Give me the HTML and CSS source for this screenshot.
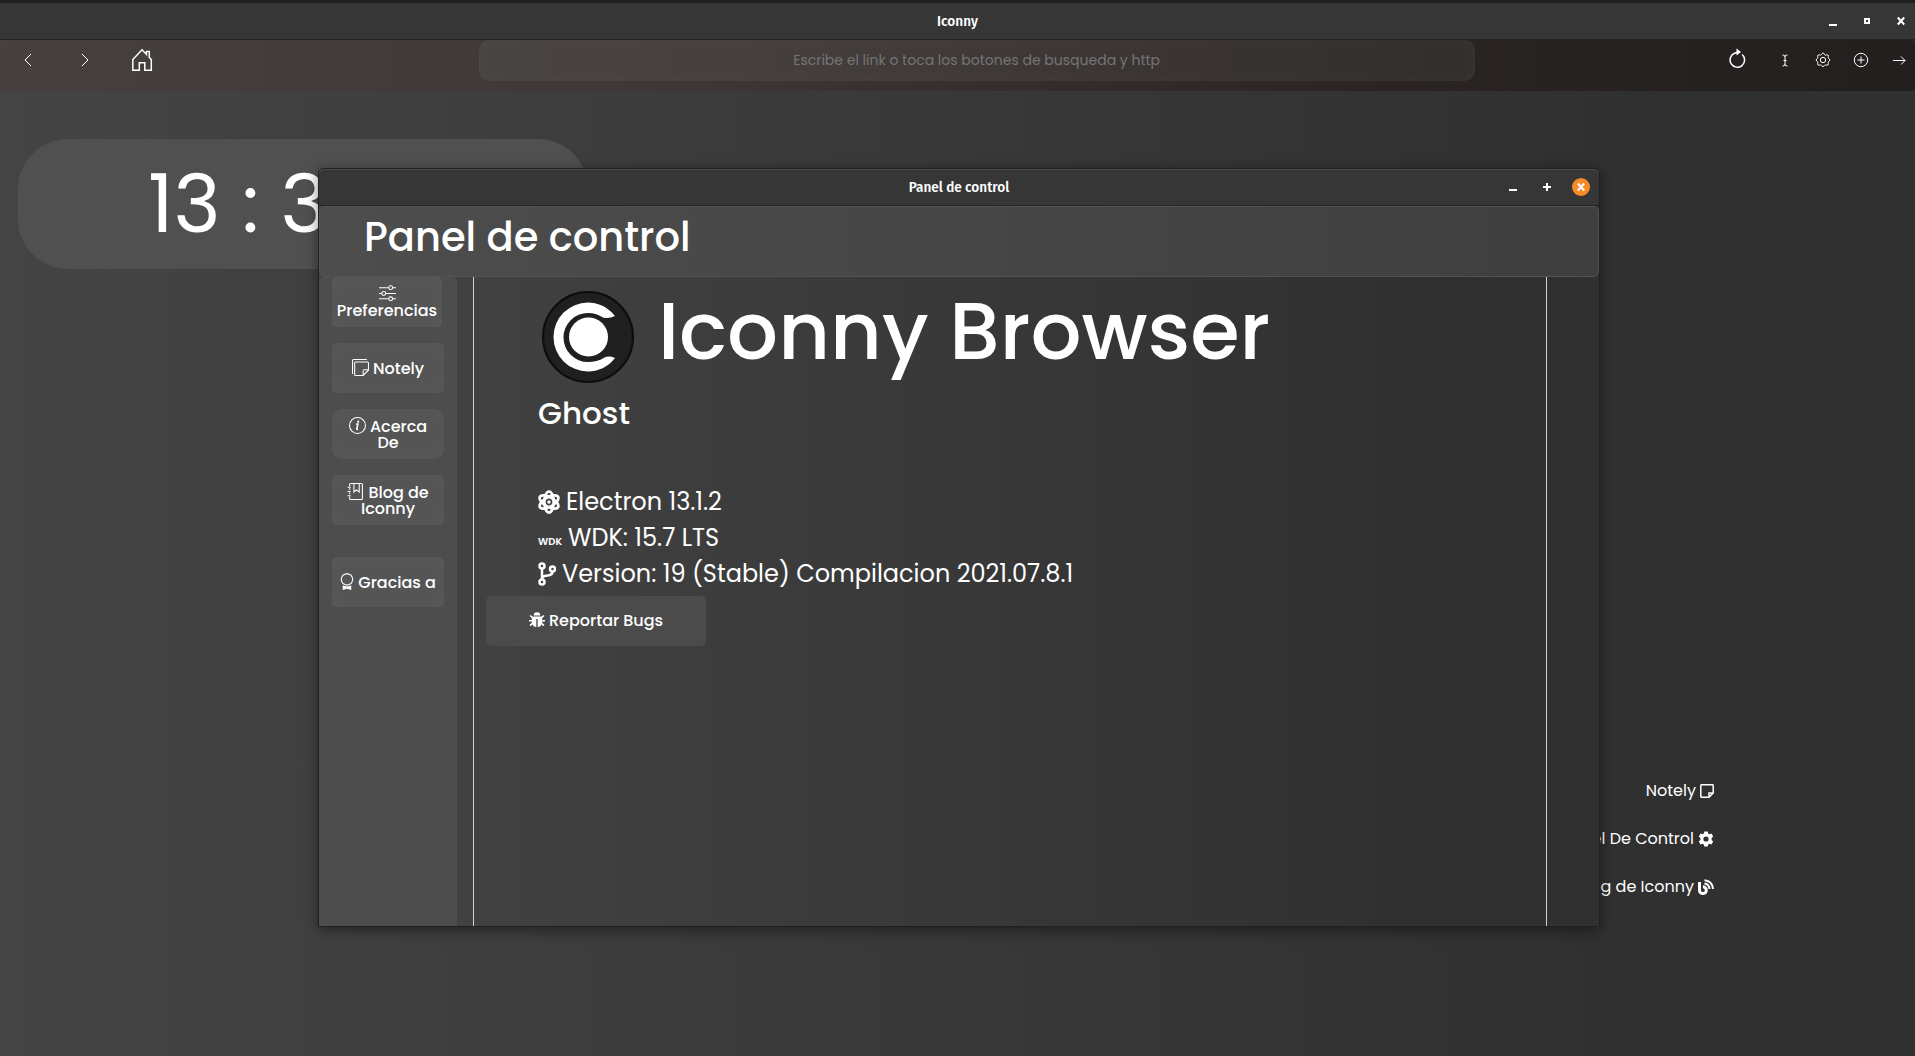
FILE: index.html
```html
<!DOCTYPE html>
<html lang="es">
<head>
<meta charset="utf-8">
<title>Iconny</title>
<link rel="stylesheet" href="styles.css">
</head>
<body>
<header class="titlebar main-titlebar">
  <h1 class="titlebar-name">Iconny</h1>
  <div class="window-controls">
    <button type="button" class="win-btn" aria-label="Minimizar"><svg viewBox="0 0 18 18"><path d="M5 12h8v2H5z"/></svg></button>
    <button type="button" class="win-btn" aria-label="Restaurar"><svg viewBox="0 0 18 18"><path d="M6 6h6v6H6zM8 8v2h2V8z" fill-rule="evenodd"/></svg></button>
    <button type="button" class="win-btn" aria-label="Cerrar"><svg viewBox="0 0 18 18"><path class="cross" d="M5.800 5.500l6.400 7M12.200 5.500l-6.400 7"/></svg></button>
  </div>
</header>
<nav class="toolbar">
  <div class="nav-buttons">
    <button type="button" class="tool" aria-label="Atrás"><svg class="line" viewBox="0 0 24 24"><path d="M15 6l-6 6 6 6"/></svg></button>
    <button type="button" class="tool" aria-label="Adelante"><svg class="line" viewBox="0 0 24 24"><path d="M9 6l6 6-6 6"/></svg></button>
    <button type="button" class="tool" aria-label="Inicio"><svg class="line home" viewBox="0 0 24 24"><path d="M2.800 22.300V11.500L12 1.800l4.500 4.700V3.500h2.800v6l2 2v10.800h-6.500v-7.500H9.300v7.500z"/></svg></button>
  </div>
  <input class="address" type="text" aria-label="Dirección" placeholder="Escribe el link o toca los botones de busqueda y http">
  <div class="page-buttons">
    <button type="button" class="tool reload" aria-label="Recargar"><svg class="line" viewBox="0 0 24 24"><path class="medium" d="M17.200 6.500A7.300 7.300 0 1 1 9.500 5.200L13 4.300"/><path class="solid" d="M11.500 .5l4.500 3.600-4.500 3.400z"/></svg></button>
    <button type="button" class="tool" aria-label="Texto"><svg class="line" viewBox="0 0 24 24"><path d="M9.500 7q2.500 0 2.500 1.500Q12 7 14.500 7M12 8v9M9.500 18q2.500 0 2.500-1.500Q12 18 14.500 18M10.500 12.500h3"/></svg></button>
    <button type="button" class="tool" aria-label="Ajustes"><svg class="line" viewBox="0 0 24 24"><circle cx="12" cy="12" r="2.700"/><path d="M12 5q1.100 0 1.500 1.500t2.100.3q2.200-.2 1.700 1.700-.8 1.500.6 2 2.100 1.500 0 3-1.400.6-.6 2 .4 2-1.700 1.700-1.600-.8-2.100.4-1.500 2.200-3 0-.5-1.200-2.100-.4-2.100.3-1.700-1.700.8-1.400-.6-2-2.100-1.500 0-3 1.400-.5.6-2-.4-1.900 1.700-1.700 1.700.900 2.100-.300T12 5z"/></svg></button>
    <button type="button" class="tool" aria-label="Nueva pestaña"><svg class="line" viewBox="0 0 24 24"><circle cx="12" cy="12" r="6.700"/><path d="M12 8.500v7M8.500 12h7"/></svg></button>
    <button type="button" class="tool" aria-label="Ir"><svg class="line" viewBox="0 0 24 24"><path d="M6 12.500h12M14 8.500l4 4-4 4"/></svg></button>
  </div>
</nav>
<main class="home-page">
  <section class="clock"><time datetime="13:37">13 : 37</time></section>
  <nav class="shortcuts">
    <a href="#notely">Notely <svg class="line bold-line" viewBox="0 0 14 14"><path d="M1.500 .8h11q.7 0 .7.700v7.500l-4.200 4.200H1.500q-.7 0-.7-.7v-11q0-.7.7-.7zM13 9H9v4"/></svg></a>
    <a href="#panel">Panel De Control <svg class="wide" viewBox="0 0 16 16"><path fill-rule="evenodd" d="M6.300.5h3.400l.5 2.100 1.200.7 2.100-.7 1.700 3-1.600 1.500v1.800l1.600 1.500-1.700 3-2.100-.7-1.200.7-.5 2.100H6.300l-.5-2.100-1.200-.7-2.100.7-1.700-3 1.600-1.500V7.100L.8 5.600l1.700-3 2.100.7 1.200-.7zM8 5.400a2.600 2.600 0 1 0 0 5.200 2.600 2.600 0 0 0 0-5.200z"/></svg></a>
    <a href="#blog">Blog de Iconny <svg class="wide" viewBox="0 0 16 16"><path class="blog-b" d="M1.500 3v8.200A3.400 3.400 0 1 0 4.900 7.800"/><path class="waves" d="M6.500 4.500q4.500.5 5 5.500M6.500 1.200q8 .8 8.500 8.800"/></svg></a>
  </nav>
</main>

<section class="panel" aria-label="Panel de control">
  <header class="titlebar panel-titlebar">
    <p class="titlebar-name">Panel de control</p>
    <div class="window-controls">
      <button type="button" class="win-btn" aria-label="Minimizar"><svg viewBox="0 0 18 18"><path d="M5 11h8v2H5z"/></svg></button>
      <button type="button" class="win-btn" aria-label="Maximizar"><svg viewBox="0 0 18 18"><path d="M8 5h2v3h3v2h-3v3H8v-3H5V8h3z"/></svg></button>
      <button type="button" class="win-btn close" aria-label="Cerrar"><svg viewBox="0 0 18 18"><path class="cross" d="M5.800 5.500l6.400 7M12.200 5.500l-6.400 7"/></svg></button>
    </div>
  </header>
  <header class="panel-header"><h2>Panel de control</h2></header>
  <div class="panel-body">
    <nav class="sidebar">
      <button type="button" class="side-btn prefs"><svg class="line" viewBox="0 0 16 16"><path d="M0 2.500h9.200M12.800 2.500H16M0 8h2.700M6.300 8H16M0 13h9.200M12.800 13H16"/><circle cx="11" cy="2.500" r="1.800"/><circle cx="4.500" cy="8" r="1.800"/><circle cx="11" cy="13" r="1.800"/></svg> Preferencias</button>
      <button type="button" class="side-btn"><svg class="line" viewBox="0 0 16 16"><path d="M.500 14V1.500q0-1 1-1H14M3.500 2.800h11q1 0 1 1v6.700l-5 5h-7q-1 0-1-1V3.800q0-1 1-1zM15.500 10.200h-4q-1 0-1 1v4"/></svg> Notely</button>
      <button type="button" class="side-btn about"><svg class="line" viewBox="0 0 16 16"><circle cx="8" cy="8" r="7.500"/><path class="medium" d="M6.800 6.700h1.500l-1 4.500q0 .8 1.200.2"/><circle class="solid" cx="8.700" cy="4.400" r="1"/></svg> Acerca De</button>
      <button type="button" class="side-btn"><svg class="line" viewBox="0 0 16 16"><path d="M2.500 3V1.500q0-1 1-1h10q1 0 1 1v13q0 1-1 1h-10q-1 0-1-1V13M2.500 5v1.500M2.500 9v1.500M.5 4h3M.5 8h3M.5 12h3M6.500.5v8L9 6.500l2.500 2v-8"/></svg> Blog de Iconny</button>
      <button type="button" class="side-btn thanks"><svg class="line award" viewBox="0 0 13 16"><path d="M6.500.6l2 .5 1.800 1 1.100 1.800.5 2.100-.5 2.100-1.100 1.800-1.800 1-2 .5-2-.5-1.800-1-1.100-1.800L1.100 6l.5-2.100 1.100-1.800 1.800-1z"/><path class="solid" d="M2.500 11.800l4 1 4-1V16l-4-1.200-4 1.200z"/></svg> Gracias a</button>
    </nav>
    <div class="content">
      <div class="about-head">
        <svg class="logo" viewBox="0 0 92 92" role="img" aria-label="Iconny"><circle cx="46" cy="46" r="45" fill="#202020" stroke="#0d0d0d" stroke-width="2"/><circle cx="46.500" cy="46" r="19.500" fill="#fff"/><path fill="#fff" d="M73 25C65 15 55 11.500 46 11.500a34.500 34.500 0 0 0 0 69C56 80.500 66 76 73 67Q67 64.500 62.500 66.500C57 70 52 71 46 71a24.500 24.500 0 0 1 0-49C52 22 57 24 61 26.500Q67 28 73 25z"/></svg>
        <h2>Iconny Browser</h2>
      </div>
      <h3>Ghost</h3>
      <ul class="versions">
        <li><svg class="atom" viewBox="0 0 22 24"><g fill="none" stroke="#fff" stroke-width="2.700"><ellipse cx="11" cy="12" rx="4.700" ry="10.500"/><ellipse cx="11" cy="12" rx="4.700" ry="10.500" transform="rotate(60 11 12)"/><ellipse cx="11" cy="12" rx="4.700" ry="10.500" transform="rotate(120 11 12)"/></g><circle cx="11" cy="12" r="1.700"/></svg>Electron 13.1.2</li>
        <li><small>WDK</small>WDK: 15.7 LTS</li>
        <li><svg class="branch" viewBox="0 0 18 24"><g fill="none" stroke="#fff" stroke-width="2.500"><circle cx="4" cy="4" r="2.500"/><circle cx="4" cy="20" r="2.500"/><circle cx="14.500" cy="7" r="2.500"/><path d="M4 6.500v11M14.500 9.500q0 3.500-5 4-5.500.3-5.500 3.500"/></g></svg>Version: 19 (Stable) Compilacion 2021.07.8.1</li>
      </ul>
      <button type="button" class="report"><svg viewBox="0 0 16 16"><path d="M4.700 3.600a3.300 3.300 0 0 1 6.600 0z"/><path d="M3.500 4.600h9l2-1.700 1 1.200-2.300 2v1.800H16v1.600h-2.800v1.200l2.300 2.300-1.200 1.200-1.800-1.700Q11.500 15 8.700 15V7H7.300v8q-2.800 0-3.800-2.500l-1.800 1.700L.5 13l2.300-2.300V9.500H0V7.900h2.800V6.100l-2.300-2 1-1.200z"/></svg> Reportar Bugs</button>
    </div>
    <div class="gutter"></div>
  </div>
</section>
</body>
</html>
```
FILE: styles.css
```css
* { box-sizing: border-box; }

body {
  margin: 0;
  min-height: 100vh;
  display: flex;
  flex-direction: column;
  position: relative;
  border-top: 3px solid #231f20;
  background: linear-gradient(90deg, #444 0%, #303030 85%);
  color: #fff;
  font: 16px/24px Poppins, Inter, sans-serif;
}

button, input { font: inherit; color: inherit; border: 0; padding: 0; background: none; }
h1, h2, h3, p, ul { margin: 0; padding: 0; font-weight: 500; }
svg { fill: #fff; flex: none; }
.line { fill: none; stroke: #fff; stroke-width: 1; }
.medium { stroke-width: 1.5; }
.bold-line { stroke-width: 1.5; }
.solid { fill: #fff; stroke: none; }
.waves { fill: none; stroke: #fff; stroke-width: 2; }
.blog-b { fill: none; stroke: #fff; stroke-width: 3; }
.cross { fill: none; stroke: #fff; stroke-width: 2; }

/* Window title bars */
.titlebar {
  display: grid;
  grid-template-columns: 1fr auto 1fr;
  align-items: center;
  height: 37px;
  flex: none;
  background: #363636;
  border-bottom: 1px solid #252525;
}
.titlebar-name { grid-column: 2; font: 500 15px/20px "Fira Sans Condensed", "Noto Sans", sans-serif; }
.window-controls { display: flex; justify-content: flex-end; gap: 16px; padding-right: 5px; }
.win-btn { width: 18px; height: 18px; border-radius: 50%; }
.win-btn svg { display: block; width: 18px; height: 18px; }
.close { background: #f68b28; }

/* Browser toolbar */
.toolbar {
  display: grid;
  grid-template-columns: 25% 52% 1fr;
  height: 51px;
  flex: none;
  background: linear-gradient(90deg, #464140 0%, #3d3735 35%, #2a2524 72%, #231f1e 100%);
  border-radius: 4px;
}
.nav-buttons, .page-buttons { display: flex; height: 40px; align-items: center; }
.nav-buttons { gap: 33px; padding-left: 16px; }
.page-buttons { gap: 14px; justify-content: flex-end; padding-right: 4px; }
.tool { width: 24px; height: 24px; }
.tool svg { display: block; width: 24px; height: 24px; }
.home { stroke-width: 1.5; }
.reload { margin-right: 10px; }
.address {
  height: 41px;
  border-radius: 10px;
  text-align: center;
  font-size: 14px;
  background: rgba(255, 255, 255, .05);
  box-shadow: inset 0 0 20px rgba(255, 255, 255, .03);
}
.address::placeholder { color: #757575; opacity: 1; }

/* Start page */
.home-page { flex: 1; display: flex; flex-direction: column; align-items: flex-start; padding: 48px 18px 157px; }
.clock {
  width: 570px;
  height: 130px;
  padding-left: 130px;
  border-radius: 50px;
  background: #505050;
  font-size: 80px;
  line-height: 130px;
}
.shortcuts { display: flex; flex-direction: column; gap: 24px; align-self: flex-end; margin-top: auto; padding-right: 183px; text-align: right; }
.shortcuts a { display: flex; justify-content: flex-end; align-items: center; gap: 4px; color: inherit; text-decoration: none; }
.shortcuts svg { width: 14px; height: 14px; }
.shortcuts .wide { width: 16px; height: 16px; }

/* Control panel window */
.panel {
  position: absolute;
  left: 318px;
  right: 315px;
  top: 165px;
  bottom: 129px;
  display: flex;
  flex-direction: column;
  border: 1px solid #202020;
  border-radius: 5px 5px 0 0;
  background: linear-gradient(90deg, #444 0%, #303030 85%);
  box-shadow: 0 3px 14px rgba(0, 0, 0, .45);
}
.panel-titlebar { border-radius: 5px 5px 0 0; box-shadow: inset 0 1px #4a4a4a; }
.panel-titlebar .window-controls { padding-right: 9px; }
.panel-header {
  flex: none;
  height: 71px;
  padding: 0 44px;
  border: 1px solid #535353;
  border-radius: 5px;
  background: linear-gradient(90deg, #4d4d4d, #3f3f3f);
}
.panel-header h2 { font-size: 40px; line-height: 60px; }
.panel-body { flex: 1; min-height: 0; display: flex; }

.sidebar {
  width: 138px;
  padding: 0 13px;
  display: flex;
  flex-direction: column;
  gap: 16px;
  background: #4d4d4d;
  border-radius: 5px 5px 0 0;
}
.side-btn {
  height: 50px;
  flex: none;
  border-radius: 5px;
  background: #555;
  box-shadow: inset 0 0 14px #5a5a5a;
  font-weight: 500;
  line-height: 16px;
}
.side-btn svg { width: 17px; height: 17px; vertical-align: -2px; }
.side-btn .award { width: 14px; }
.prefs { margin-right: 2px; }
.about { border-radius: 10px; padding: 0 12px; }
.thanks { margin-top: 16px; }

.content {
  flex: 1;
  margin-left: 16px;
  padding: 14px 12px 0;
  border: solid #d0d0d0;
  border-width: 0 1px;
}
.about-head { display: flex; gap: 24px; padding-left: 56px; height: 92px; }
.logo { width: 92px; height: 92px; }
.about-head h2 { font-size: 80px; line-height: 80px; white-space: nowrap; }
.content h3 { padding-left: 52px; font-size: 31px; line-height: 60px; }
.versions { list-style: none; padding: 41px 0 0 52px; font-size: 24px; line-height: 36px; }
.versions li { display: flex; align-items: center; gap: 6px; font-weight: 400; }
.atom { width: 22px; height: 24px; }
.branch { width: 18px; height: 24px; }
.versions small { font-size: 10px; font-weight: 600; line-height: 12px; padding-top: 8px; }
.report {
  width: 220px;
  height: 50px;
  margin-top: 4px;
  border-radius: 5px;
  background: #4b4b4b;
  font-weight: 500;
}
.report svg { width: 16px; height: 16px; vertical-align: -2px; }
.gutter { width: 52px; flex: none; }
```
